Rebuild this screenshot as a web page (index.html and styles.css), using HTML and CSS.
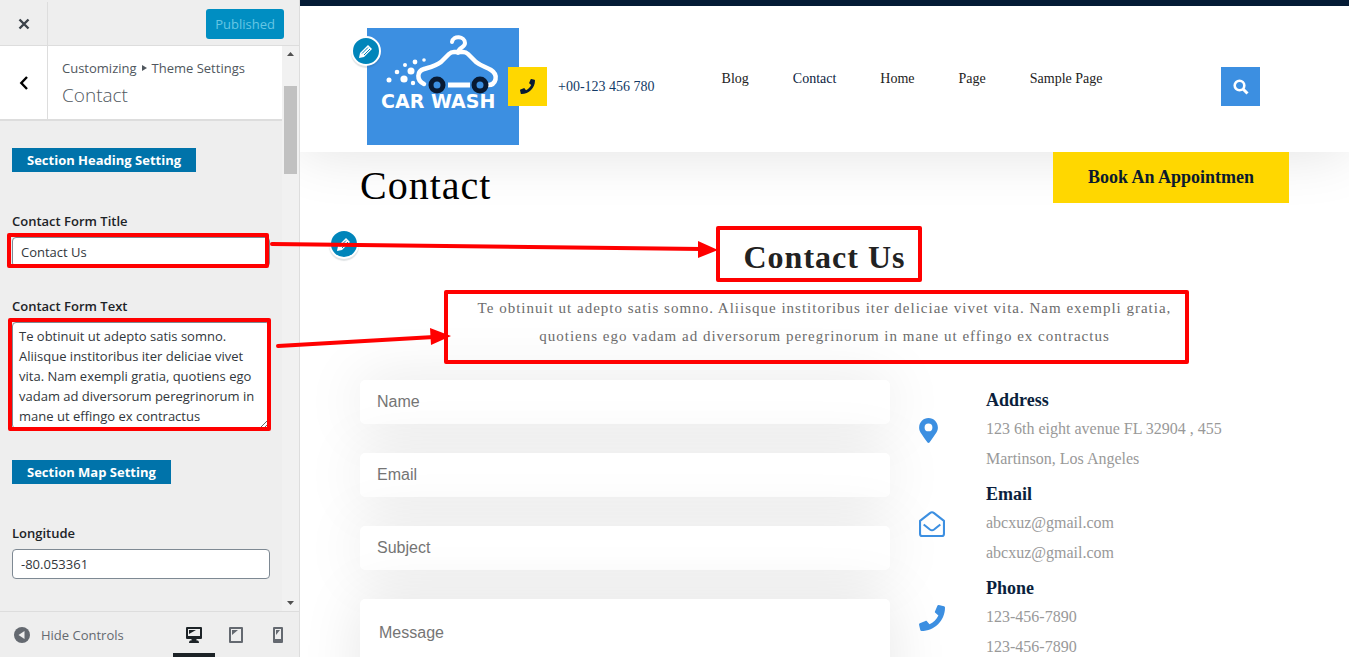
FILE: index.html
```html
<!DOCTYPE html>
<html lang="en">
<head>
<meta charset="utf-8">
<title>Customize: Contact</title>
<link rel="stylesheet" href="styles.css">
</head>
<body>
<div class="app">
  <aside class="sidebar">
    <header class="topbar">
      <button class="close" aria-label="Close">
        <svg width="12" height="12" viewBox="0 0 12 12"><path d="M1.5 1.5l9 9M10.500 1.500l-9 9" stroke="#3c434a" stroke-width="2.400"/></svg>
      </button>
      <button class="publish" disabled>Published</button>
    </header>
    <div class="scroll-area">
      <div class="panel">
        <div class="panel-head">
          <button class="back" aria-label="Back">
            <svg width="10" height="14" viewBox="0 0 10 14"><path d="M8 1L2.300 7L8 13" fill="none" stroke="#000" stroke-width="2.400"/></svg>
          </button>
          <div class="crumbs">
            <span class="trail">Customizing <svg width="5" height="6" viewBox="0 0 5 6"><path d="M0 0l5 3l-5 3z" fill="#50575e"/></svg> Theme Settings</span>
            <h3 class="panel-title">Contact</h3>
          </div>
        </div>
        <div class="controls">
          <h4 class="tag">Section Heading Setting</h4>
          <div class="control">
            <label for="ftitle">Contact Form Title</label>
            <input id="ftitle" type="text" value="Contact Us">
          </div>
          <div class="control">
            <label for="ftext">Contact Form Text</label>
            <textarea id="ftext" rows="5">Te obtinuit ut adepto satis somno. Aliisque institoribus iter deliciae vivet vita. Nam exempli gratia, quotiens ego vadam ad diversorum peregrinorum in mane ut effingo ex contractus</textarea>
          </div>
          <h4 class="tag">Section Map Setting</h4>
          <div class="control">
            <label for="lng">Longitude</label>
            <input id="lng" type="text" value="-80.053361">
          </div>
        </div>
      </div>
      <div class="scrollbar" aria-hidden="true">
        <svg width="7" height="4" viewBox="0 0 7 4"><path d="M0 4L3.500 0L7 4z" fill="#505050"/></svg>
        <span class="thumb"></span>
        <svg width="7" height="4" viewBox="0 0 7 4"><path d="M0 0L3.500 4L7 0z" fill="#505050"/></svg>
      </div>
    </div>
    <footer class="bottombar">
      <button class="collapse">
        <svg width="16" height="16" viewBox="0 0 16 16"><circle cx="8" cy="8" r="8" fill="#646970"/><path d="M10.500 4v8L4.500 8z" fill="#eee"/></svg>
        Hide Controls
      </button>
      <div class="devices">
        <button class="device active" aria-label="Desktop preview">
          <svg width="16" height="16" viewBox="0 0 16 16"><path fill-rule="evenodd" d="M1 0h14q1 0 1 1v10q0 1-1 1h-4.500v1.500h1.500q1 .500 1 2.500H3q0-2 1-2.500h1.500V12H1q-1 0-1-1V1q0-1 1-1zM2 2v7h12V2z" fill="#1d2327"/><path d="M3 3h7L3 7z" fill="#1d2327"/></svg>
        </button>
        <button class="device" aria-label="Tablet preview">
          <svg width="14" height="16" viewBox="0 0 14 16"><path fill-rule="evenodd" d="M1 0h12q1 0 1 1v14q0 1-1 1H1q-1 0-1-1V1q0-1 1-1zM2 2v12h10V2z" fill="#646970"/><path d="M3 3h6L3 8z" fill="#646970"/></svg>
        </button>
        <button class="device" aria-label="Mobile preview">
          <svg width="10" height="16" viewBox="0 0 10 16"><path fill-rule="evenodd" d="M1 0h8q1 0 1 1v14q0 1-1 1H1q-1 0-1-1V1q0-1 1-1zM2 2v10h6V2z" fill="#646970"/><path d="M3 3h4L3 8z" fill="#646970"/></svg>
        </button>
      </div>
    </footer>
  </aside>

  <main class="preview">
    <header class="site-header">
      <div class="brand">
        <a class="logo" href="#" aria-label="Car Wash">
          <svg width="152" height="117" viewBox="0 0 152 117">
            <g fill="none" stroke="#fff" stroke-width="4.500" stroke-linecap="round" stroke-linejoin="round">
              <path stroke-width="4" d="M85 14c1-7 13-6 13 1c0 5-7 4-7 10"/>
              <path d="M57 56c-8-4-7-13 0-15c7-2 12-3 17-7l8-8q2-2 5-2h9q3 0 5 2l8 8c5 4 10 5 15 8c8 5 5 15-3 15"/>
              <path d="M81 57h22" stroke-linecap="butt" stroke-width="5"/>
            </g>
            <g fill="#3c8fe1" stroke="#081a33" stroke-width="5"><circle cx="70" cy="57" r="6"/><circle cx="113" cy="57" r="6"/></g>
            <g fill="#fff"><circle cx="22" cy="52" r="2.500"/><circle cx="30" cy="44" r="2.300"/><circle cx="37" cy="51" r="3.600"/><circle cx="38" cy="37" r="2"/><circle cx="44" cy="43" r="3.500"/><circle cx="48" cy="34" r="2.400"/><circle cx="57" cy="32" r="1.800"/><circle cx="46" cy="55" r="2.200"/></g>
            <text class="logo-text" x="14" y="80">CAR WASH</text>
          </svg>
        </a>
        <button class="edit edit-logo" aria-label="Edit logo">
          <svg width="16" height="16" viewBox="0 0 16 16"><path d="M1 15l1-5L10 2l4 4l-8 8z" fill="#fff"/><path d="M4 10.500l6-6M6 12l6-6" stroke="#0085ba" stroke-width="1"/></svg>
        </button>
      </div>
      <a class="phone" href="tel:+00123456780">
        <span class="phone-icon"><svg width="15" height="15" viewBox="0 0 512 512"><path fill="#081a33" d="M493 25L389 1c-11-3-23 3-27 14l-48 112c-4 10-1 22 7 28l61 50c-36 77-98 139-176 176l-50-61c-7-8-18-11-28-7L16 361C5 366-1 377 1 388l24 104c3 12 13 20 24 20c256 0 463-207 463-463c0-11-8-21-19-24z"/></svg></span>
        +00-123 456 780
      </a>
      <nav class="menu">
        <a href="#">Blog</a><a href="#" class="current">Contact</a><a href="#">Home</a><a href="#">Page</a><a href="#">Sample Page</a>
      </nav>
      <button class="search" aria-label="Search"><svg width="16" height="16" viewBox="0 0 16 16"><circle cx="6.500" cy="6.500" r="4.800" fill="none" stroke="#fff" stroke-width="2.600"/><path d="M10 10l4.500 4.500" stroke="#fff" stroke-width="3"/></svg></button>
    </header>

    <div class="container">
      <div class="title-row">
        <h1>Contact</h1>
        <a class="book" href="#">Book An Appointmen</a>
      </div>
      <section class="intro">
        <button class="edit edit-section" aria-label="Edit section">
          <svg width="16" height="16" viewBox="0 0 16 16"><path d="M1 15l1-5L10 2l4 4l-8 8z" fill="#fff"/><path d="M4 10.500l6-6M6 12l6-6" stroke="#0085ba" stroke-width="1"/></svg>
        </button>
        <h2>Contact Us</h2>
        <p>Te obtinuit ut adepto satis somno. Aliisque institoribus iter deliciae vivet vita. Nam exempli gratia, quotiens ego vadam ad diversorum peregrinorum in mane ut effingo ex contractus</p>
      </section>
      <div class="columns">
        <form class="contact-form">
          <input type="text" placeholder="Name" aria-label="Name">
          <input type="email" placeholder="Email" aria-label="Email">
          <input type="text" placeholder="Subject" aria-label="Subject">
          <textarea placeholder="Message" aria-label="Message"></textarea>
        </form>
        <div class="details">
          <div class="detail">
            <svg width="19" height="25" viewBox="0 0 384 512"><path fill="#3c8fe1" d="M172 502C27 291 0 270 0 192C0 86 86 0 192 0s192 86 192 192c0 78-27 99-172 310c-10 13-30 13-40 0zM192 272a80 80 0 1 0 0-160a80 80 0 0 0 0 160z"/></svg>
            <div><h3>Address</h3><p>123 6th eight avenue FL 32904 , 455 Martinson, Los Angeles</p></div>
          </div>
          <div class="detail">
            <svg width="26" height="26" viewBox="0 0 25 25"><path d="M1 9.500L10.500 2q2-1.500 4 0L24 9.500V22q0 2-2 2H3q-2 0-2-2zM4.500 13l6 4.800q2 1.500 4 0l6-4.800" fill="none" stroke="#3c8fe1" stroke-width="2" stroke-linejoin="round"/></svg>
            <div><h3>Email</h3><p>abcxuz@gmail.com<br>abcxuz@gmail.com</p></div>
          </div>
          <div class="detail">
            <svg width="26" height="26" viewBox="0 0 512 512"><path fill="#3c8fe1" d="M493 25L389 1c-11-3-23 3-27 14l-48 112c-4 10-1 22 7 28l61 50c-36 77-98 139-176 176l-50-61c-7-8-18-11-28-7L16 361C5 366-1 377 1 388l24 104c3 12 13 20 24 20c256 0 463-207 463-463c0-11-8-21-19-24z"/></svg>
            <div><h3>Phone</h3><p>123-456-7890<br>123-456-7890</p></div>
          </div>
        </div>
      </div>
    </div>
  </main>

  <svg class="markup" width="1349" height="657" viewBox="0 0 1349 657" aria-hidden="true">
    <g fill="none" stroke="#f00" stroke-width="4" stroke-linejoin="round">
      <rect x="9" y="235" width="258" height="31"/>
      <rect x="10" y="320" width="259" height="109"/>
      <rect x="718" y="228" width="202" height="52"/>
      <rect x="446" y="292" width="741" height="70"/>
      <path d="M272 244L702 249M278 346L434 337" stroke-linecap="round"/>
    </g>
    <path d="M698 241l20 9l-20 8zM430 328l21 8l-20 9z" fill="#f00"/>
  </svg>
</div>
</body>
</html>
```
FILE: styles.css
```css
* { box-sizing: border-box; }
body { margin: 0; font-family: "Liberation Serif", "Times New Roman", serif; background: #fff; }
button { font: inherit; border: 0; padding: 0; cursor: pointer; }
a { color: inherit; text-decoration: none; }
h1, h2, h3, h4, p { margin: 0; }
svg { display: block; flex: none; }

.app { position: relative; display: flex; height: 100vh; overflow: hidden; }

.sidebar {
  flex: none; width: 300px; display: flex; flex-direction: column;
  background: #eee; border-right: 1px solid #ddd; color: #3c434a;
  font-family: "Open Sans", "Noto Sans", sans-serif; font-size: 13px;
}
.topbar { display: flex; justify-content: space-between; align-items: center; height: 46px; flex: none; border-bottom: 1px solid #ddd; padding: 2px 15px 0 0; }
.close { width: 48px; height: 43px; display: grid; place-items: center; background: none; border-right: 1px solid #ddd; }
.publish { height: 30px; padding: 0 9px; border-radius: 3px; background: #008ec2; color: #66c6e4; }
.scroll-area { flex: 1; display: flex; min-height: 0; }
.panel { flex: 1; min-width: 0; overflow: hidden; }
.panel-head { display: flex; height: 75px; background: #fff; border-bottom: 2px solid #ddd; }
.back { width: 48px; display: grid; place-items: center; background: #fff; border-right: 1px solid #ddd; }
.crumbs { padding: 12px 14px 0; color: #50575e; }
.trail { display: flex; align-items: center; gap: 5px; line-height: 20px; }
.panel-title { font-size: 19px; font-weight: 300; line-height: 34px; }
.controls { padding: 27px 12px 0; }
.tag { width: fit-content; padding: 0 15px; background: #0073aa; color: #fff; font-size: 13px; font-weight: 700; line-height: 24px; }
.control { padding-top: 27px; }
.tag + .control { padding-top: 37px; }
.control label { display: block; font-weight: 600; line-height: 24px; margin-bottom: 4px; color: #1d2327; }
.control input, .control textarea {
  display: block; width: 100%; border: 1px solid #7e8993; border-radius: 4px; background: #fff; color: #32373c;
  font-family: inherit; font-size: 13px;
}
.control input { height: 30px; padding: 0 8px; }
.control textarea { height: 107px; padding: 3px 6px; line-height: 20px; overflow: hidden; }
.control + .tag { margin-top: 31px; }
.scrollbar { width: 17px; flex: none; background: #f1f1f1; display: flex; flex-direction: column; align-items: center; padding: 6px 0; }
.thumb { width: 13px; height: 88px; margin: 30px 0 auto; background: #c1c1c1; }
.bottombar { height: 46px; flex: none; display: flex; justify-content: space-between; border-top: 1px solid #ddd; }
.collapse { display: flex; align-items: center; gap: 11px; padding-left: 14px; background: none; color: #646970; }
.devices { display: flex; }
.device { width: 42px; display: grid; place-items: center; background: none; border-bottom: 4px solid transparent; padding-top: 4px; }
.device.active { border-color: #1d2327; }

.preview { flex: 1; min-width: 0; overflow: hidden; border-top: 6px solid #041b35; }
.site-header {
  position: relative; display: flex; align-items: flex-start; height: 146px; padding: 0 89px 0 67px;
  background: #fff; box-shadow: 0 0 60px rgba(0, 0, 0, 0.12);
}
.brand { position: relative; width: 141px; flex: none; padding-top: 22px; }
.logo { display: block; width: 152px; background: #3c8fe1; }
.logo-text { fill: #fff; font: bold 19px "DejaVu Sans", sans-serif; }
.edit {
  position: absolute; width: 30px; height: 30px; display: grid; place-items: center;
  border: 2px solid #fff; border-radius: 50%; background: #0085ba; box-shadow: 0 2px 1px rgba(46, 68, 83, 0.15);
}
.edit-logo { left: -16px; top: 30px; }
.edit-section { left: -31px; top: 26px; }
.phone { position: relative; display: flex; align-items: center; gap: 11px; margin-top: 61px; font-size: 14px; color: #123a66; white-space: nowrap; }
.phone-icon { width: 39px; height: 39px; display: grid; place-items: center; background: #ffd700; }
.menu { display: flex; gap: 44px; margin: 65px auto 0 67px; font-size: 14px; line-height: 16px; color: #222; white-space: nowrap; }
.menu .current { color: #0b2341; }
.search { width: 39px; height: 39px; margin-top: 61px; display: grid; place-items: center; background: #3c8fe1; }

.container { position: relative; padding: 0 60px; }
.title-row { display: flex; justify-content: space-between; align-items: flex-start; }
h1 { font-size: 40px; font-weight: 400; line-height: 48px; letter-spacing: 1px; padding-top: 10px; color: #000; }
.book { padding: 0 35px; line-height: 51px; background: #ffd700; color: #0b1a2e; font-size: 18px; font-weight: 700; }
.intro { position: relative; text-align: center; padding: 29px 100px 0; letter-spacing: 1px; }
.edit-section { top: 19px; }
h2 { font-size: 32px; line-height: 36px; color: #222; }
.intro p { margin-top: 19px; font-size: 15px; line-height: 28px; color: #6c6c6c; }
.columns { display: flex; gap: 29px; margin-top: 30px; }
.contact-form { flex: 530 1 0; min-width: 0; display: flex; flex-direction: column; gap: 29px; }
.contact-form input, .contact-form textarea {
  display: block; width: 100%; height: 44px; padding: 0 17px; border: 0; border-radius: 5px; background: #fff;
  box-shadow: 0 0 60px rgba(0, 0, 0, 0.1); font: 16px "Liberation Sans", Arial, sans-serif; resize: none;
}
.contact-form textarea { height: 150px; padding: 25px 19px; }
.contact-form ::placeholder { color: #757575; }
.details { flex: 370 1 0; padding-top: 3px; }
.detail { display: grid; grid-template-columns: 67px 1fr; align-items: center; height: 94px; }
.detail div { max-width: 245px; }
.detail h3 { font-size: 18px; line-height: 34px; color: #0b1f3d; }
.detail p { margin-top: -3px; padding-bottom: 3px; font-size: 16px; line-height: 30px; color: #999; }

.markup { position: absolute; left: 0; top: 0; pointer-events: none; }
```
